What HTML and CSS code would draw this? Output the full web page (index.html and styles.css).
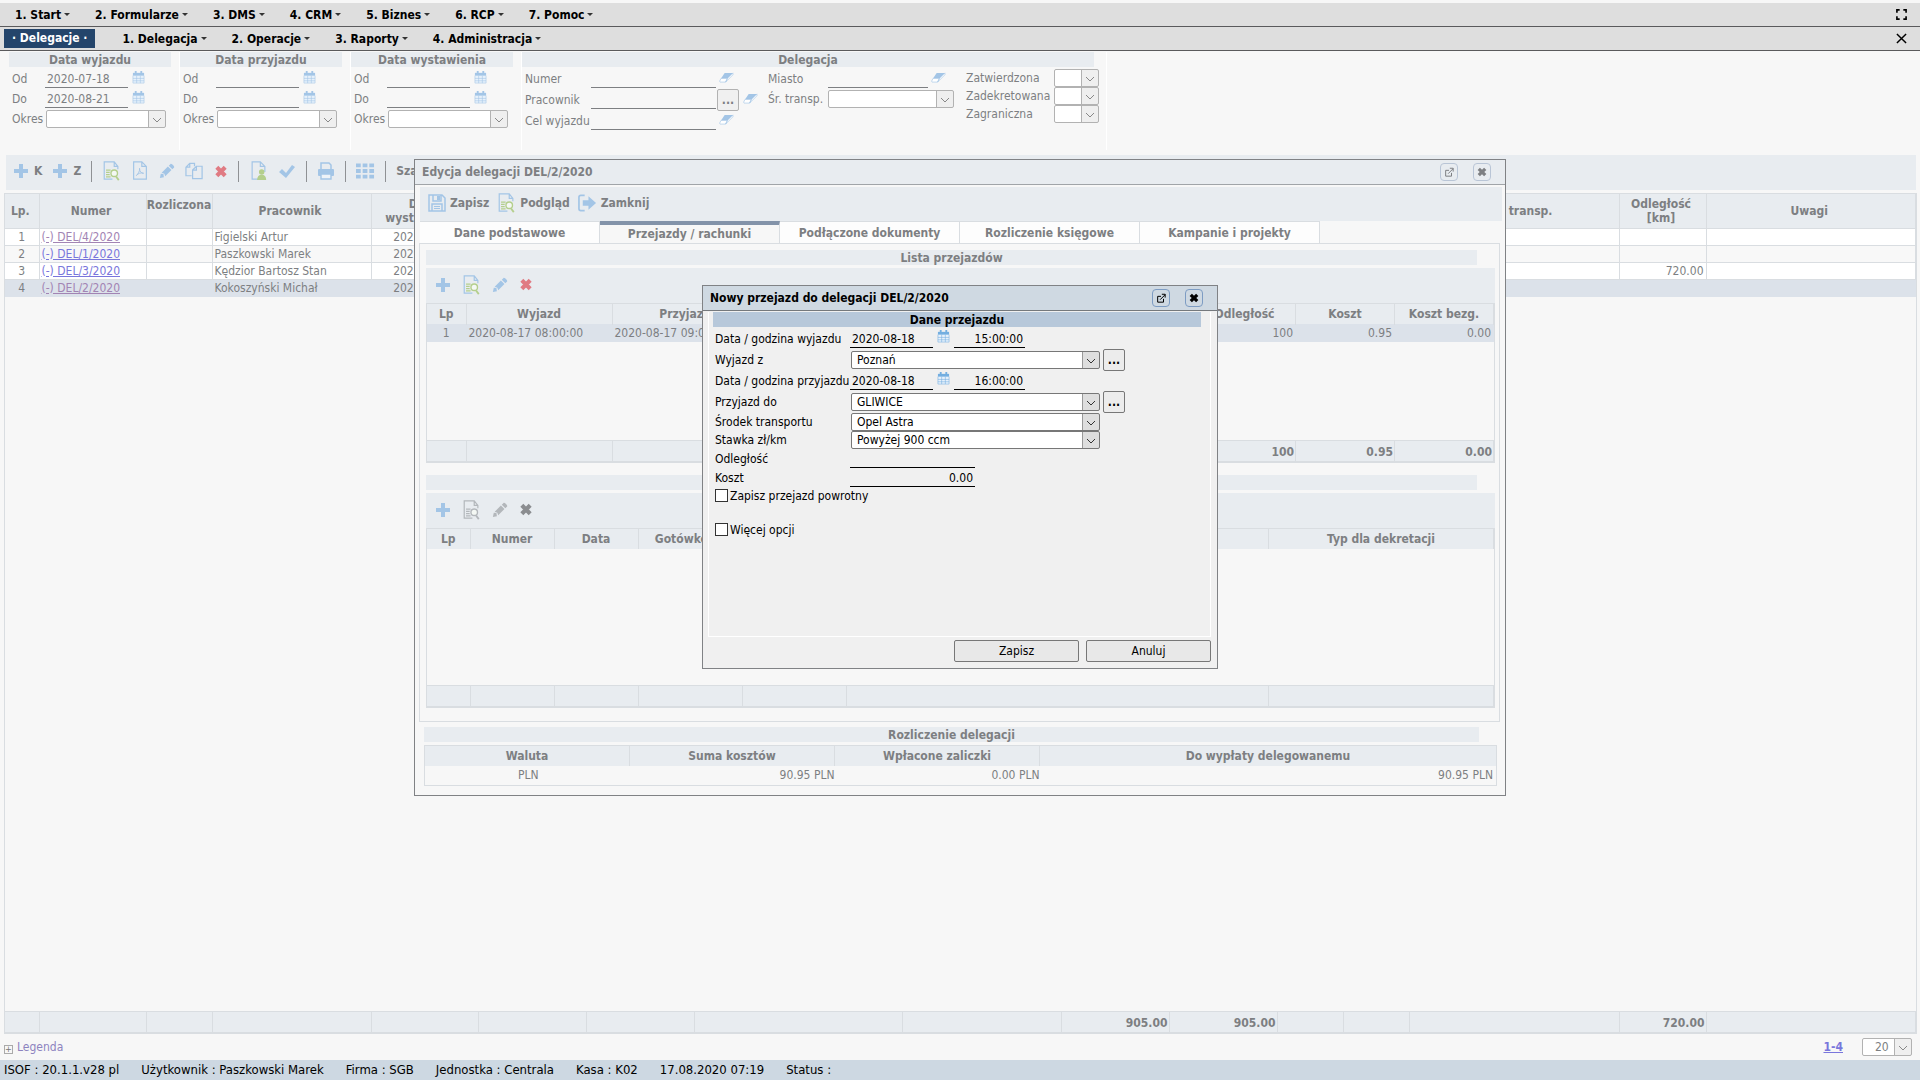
FILE: index.html
```html
<!DOCTYPE html>
<html lang="pl">
<head>
<meta charset="utf-8">
<title>Delegacje</title>
<link rel="stylesheet" href="styles.css">
</head>
<body>
<svg class="sprite" aria-hidden="true">
  <symbol id="plus" viewBox="0 0 16 16"><path d="M6 1h4v5h5v4h-5v5H6v-5H1V6h5z" fill="currentColor"/></symbol>
  <symbol id="cal" viewBox="0 0 14 14"><path d="M1 2h12v11H1z" fill="#e6f1fb"/><path d="M1 2h12v3H1z" fill="currentColor"/><path d="M3 0h2v3H3zM9 0h2v3H9z" fill="currentColor"/><path d="M1 5v8h12V5M1 8h12M1 10.500h12M5 5v8M9 5v8" fill="none" stroke="currentColor" stroke-width=".6"/></symbol>
  <symbol id="eraser" viewBox="0 0 16 12"><path d="M6 1h9l-6 6H2z" fill="currentColor"/><path d="M2 7h7l-2 4H1l-.5-1zM9 7l6-6v2l-8 8z" fill="#fff" stroke="currentColor" stroke-width=".7"/></symbol>
  <symbol id="docfind" viewBox="0 0 20 22"><path d="M17 9V6l-4-5H2v19h9M13 1v5h4" fill="none" stroke="currentColor" stroke-width="1.300"/><path d="M4 10h5M4 12.500h4M4 15h4M4 17.500h5" stroke="var(--alt)" stroke-width="1.200"/><circle cx="13" cy="13.500" r="3.600" fill="#f4f8f4" stroke="var(--alt)" stroke-width="1.500"/><path d="M15 17l3 4" stroke="var(--alt)" stroke-width="2"/></symbol>
  <symbol id="pdf" viewBox="0 0 18 22"><path d="M11 1H2v19h14V6zM11 1v5h5" fill="none" stroke="currentColor" stroke-width="1.300"/><path d="M5 16c2-2 4-5 3.500-8 0 4 2 5.500 4.500 5.500-3-1-6 0-8 2.500z" fill="none" stroke="currentColor" stroke-width="1"/></symbol>
  <symbol id="pencil" viewBox="0 0 18 18"><path d="M1 17l1-5 3 .5L5.500 16zM3 11l7-7 4 4-7 7-1-3zM11 3l2-2c1-1 5 3 4 4l-2 2z" fill="currentColor"/></symbol>
  <symbol id="copy" viewBox="0 0 20 20"><path d="M7 15H1V6l4-4h5v3M5 2v4H1M8 9l4-4h6v13H8zM12 5v4H8" fill="none" stroke="currentColor" stroke-width="1.300"/></symbol>
  <symbol id="cross" viewBox="0 0 14 14"><path d="M2.500 2.500l9 9M11.500 2.500l-9 9" fill="none" stroke="currentColor" stroke-width="4.500"/></symbol>
  <symbol id="docuser" viewBox="0 0 18 22"><path d="M9 20H2V1h9l5 5v6M11 1v5h5" fill="none" stroke="currentColor" stroke-width="1.300"/><circle cx="12.500" cy="12" r="3" fill="var(--alt)"/><path d="M7.500 21c0-4 2-6 5-6s5 2 5 6z" fill="var(--alt)"/></symbol>
  <symbol id="check" viewBox="0 0 18 16"><path d="M1 9l3-3 4 4 6-8 3 2-9 11z" fill="currentColor"/></symbol>
  <symbol id="print" viewBox="0 0 18 18"><path d="M4 7V1h8l2 2v4" fill="none" stroke="currentColor" stroke-width="1.500"/><rect x="1" y="7" width="16" height="7" rx="1" fill="currentColor"/><path d="M4 12h10v5H4z" fill="#eef3f8" stroke="currentColor" stroke-width="1.400"/></symbol>
  <symbol id="tiles" viewBox="0 0 20 16"><path d="M0 0h5v4H0zM7 0h5v4H7zM14 0h5v4h-5zM0 6h5v4H0zM7 6h5v4H7zM14 6h5v4h-5zM0 12h5v4H0zM7 12h5v4H7zM14 12h5v4h-5z" fill="currentColor"/></symbol>
  <symbol id="save" viewBox="0 0 18 18"><path d="M1 1h13l3 3v13H1zM5 1v6h8V1M4 17v-7h10v7" fill="none" stroke="currentColor" stroke-width="1.500"/><path d="M9 2h3v4H9zM6 12h6v1H6zM6 14h6v1H6z" fill="currentColor"/></symbol>
  <symbol id="exit" viewBox="0 0 20 18"><path d="M7 1H3Q1 1 1 3v12q0 2 2 2h4" fill="none" stroke="currentColor" stroke-width="1.800"/><path d="M5 6h6V2l8 7-8 7v-4H5z" fill="currentColor"/></symbol>
  <symbol id="popout" viewBox="0 0 12 12"><path d="M6 4H2v7h7V7M5 8l6-6M7 1.500h4v4" fill="none" stroke="currentColor" stroke-width="1.200"/></symbol>
  <symbol id="full" viewBox="0 0 12 12"><path d="M1 4V1h3M8 1h3v3M11 8v3H8M4 11H1V8" fill="none" stroke="currentColor" stroke-width="1.800"/></symbol>
  <symbol id="thin" viewBox="0 0 12 12"><path d="M1 1l10 10M11 1L1 11" fill="none" stroke="currentColor" stroke-width="1.600"/></symbol>
</svg>

<header>
  <nav class="menubar">
    <button>1. Start</button><button>2. Formularze</button><button>3. DMS</button><button>4. CRM</button><button>5. Biznes</button><button>6. RCP</button><button>7. Pomoc</button>
    <button class="tool" aria-label="Pełny ekran"><svg><use href="#full"/></svg></button>
  </nav>
  <nav class="menubar">
    <a class="current" href="#">· Delegacje ·</a>
    <button>1. Delegacja</button><button>2. Operacje</button><button>3. Raporty</button><button>4. Administracja</button>
    <button class="tool" aria-label="Zamknij kartę"><svg><use href="#thin"/></svg></button>
  </nav>
</header>

<main class="list">
  <form class="filters">
    <section class="group">
      <h2 class="strip">Data wyjazdu</h2>
      <div class="dates">
        <label for="w1">Od</label><input id="w1" value="2020-07-18"><svg class="cal"><use href="#cal"/></svg>
        <label for="w2">Do</label><input id="w2" value="2020-08-21"><svg class="cal"><use href="#cal"/></svg>
        <label for="w3">Okres</label><select id="w3"><option></option></select>
      </div>
    </section>
    <section class="group">
      <h2 class="strip">Data przyjazdu</h2>
      <div class="dates">
        <label for="p1">Od</label><input id="p1"><svg class="cal"><use href="#cal"/></svg>
        <label for="p2">Do</label><input id="p2"><svg class="cal"><use href="#cal"/></svg>
        <label for="p3">Okres</label><select id="p3"><option></option></select>
      </div>
    </section>
    <section class="group">
      <h2 class="strip">Data wystawienia</h2>
      <div class="dates">
        <label for="s1">Od</label><input id="s1"><svg class="cal"><use href="#cal"/></svg>
        <label for="s2">Do</label><input id="s2"><svg class="cal"><use href="#cal"/></svg>
        <label for="s3">Okres</label><select id="s3"><option></option></select>
      </div>
    </section>
    <section class="group wide">
      <h2 class="strip">Delegacja</h2>
      <div class="cols">
        <div class="col-a">
          <label for="d1">Numer</label><input id="d1"><span class="acts"><svg class="era"><use href="#eraser"/></svg></span>
          <label for="d2">Pracownik</label><input id="d2"><span class="acts"><button type="button" class="dots">...</button><svg class="era"><use href="#eraser"/></svg></span>
          <label for="d3">Cel wyjazdu</label><input id="d3"><span class="acts"><svg class="era"><use href="#eraser"/></svg></span>
        </div>
        <div class="col-b">
          <label for="d4">Miasto</label><input id="d4"><svg class="era"><use href="#eraser"/></svg>
          <label for="d5">Śr. transp.</label><select id="d5"><option></option></select>
        </div>
        <div class="col-c">
          <label for="d6">Zatwierdzona</label><select id="d6"><option></option></select>
          <label for="d7">Zadekretowana</label><select id="d7"><option></option></select>
          <label for="d8">Zagraniczna</label><select id="d8"><option></option></select>
        </div>
      </div>
    </section>
  </form>

  <div class="toolbar main-tools">
    <button class="add"><svg class="i16"><use href="#plus"/></svg>K</button>
    <button class="add"><svg class="i16"><use href="#plus"/></svg>Z</button>
    <i class="sep"></i>
    <button aria-label="Podgląd"><svg class="i20"><use href="#docfind"/></svg></button>
    <button aria-label="PDF"><svg class="i18 high"><use href="#pdf"/></svg></button>
    <button aria-label="Edytuj"><svg class="i16"><use href="#pencil"/></svg></button>
    <button aria-label="Kopiuj"><svg class="i20"><use href="#copy"/></svg></button>
    <button aria-label="Usuń" class="red"><svg class="i14"><use href="#cross"/></svg></button>
    <i class="sep"></i>
    <button aria-label="Pracownik"><svg class="i20"><use href="#docuser"/></svg></button>
    <button aria-label="Zatwierdź"><svg class="i18"><use href="#check"/></svg></button>
    <i class="sep"></i>
    <button aria-label="Drukuj"><svg class="i18"><use href="#print"/></svg></button>
    <i class="sep"></i>
    <button aria-label="Kolumny"><svg class="i20"><use href="#tiles"/></svg></button>
    <i class="sep"></i>
    <button>Szablony</button>
  </div>

  <div class="grid">
    <table class="data">
      <colgroup><col class="c34"><col class="c107"><col class="c66"><col class="c159"><col class="c107"><col class="c108"><col class="c108"><col class="c208"><col class="c159"><col class="c108"><col class="c108"><col class="c66"><col class="c66"><col class="c210"><col class="c87"><col></colgroup>
      <thead><tr><th>Lp.</th><th>Numer</th><th class="top">Rozliczona</th><th>Pracownik</th><th>Data wystawienia</th><th></th><th></th><th></th><th></th><th></th><th></th><th></th><th></th><th>Środ. transp.</th><th>Odległość [km]</th><th>Uwagi</th></tr></thead>
      <tbody>
        <tr><td class="c">1</td><td><a class="seen" href="#">(-) DEL/4/2020</a></td><td></td><td>Figielski Artur</td><td class="c">2020-08-21</td><td></td><td></td><td></td><td></td><td></td><td></td><td></td><td></td><td></td><td></td><td></td></tr>
        <tr><td class="c">2</td><td><a href="#">(-) DEL/1/2020</a></td><td></td><td>Paszkowski Marek</td><td class="c">2020-08-17</td><td></td><td></td><td></td><td></td><td></td><td></td><td></td><td></td><td></td><td></td><td></td></tr>
        <tr><td class="c">3</td><td><a href="#">(-) DEL/3/2020</a></td><td></td><td>Kędzior Bartosz Stan</td><td class="c">2020-08-17</td><td></td><td></td><td></td><td></td><td></td><td></td><td></td><td></td><td></td><td class="r">720.00</td><td></td></tr>
        <tr class="sel"><td class="c">4</td><td><a class="seen" href="#">(-) DEL/2/2020</a></td><td></td><td>Kokoszyński Michał</td><td class="c">2020-08-17</td><td></td><td></td><td></td><td></td><td></td><td></td><td></td><td></td><td></td><td></td><td></td></tr>
      </tbody>
    </table>
    <table class="data sums">
      <colgroup><col class="c34"><col class="c107"><col class="c66"><col class="c159"><col class="c107"><col class="c108"><col class="c108"><col class="c208"><col class="c159"><col class="c108"><col class="c108"><col class="c66"><col class="c66"><col class="c210"><col class="c87"><col></colgroup>
      <tbody><tr><td></td><td></td><td></td><td></td><td></td><td></td><td></td><td></td><td></td><td>905.00</td><td>905.00</td><td></td><td></td><td></td><td>720.00</td><td></td></tr></tbody>
    </table>
  </div>

  <div class="pager">
    <button class="legend"><span class="box">+</span>Legenda</button>
    <a href="#">1-4</a>
    <select aria-label="Liczba wierszy"><option>20</option></select>
  </div>
</main>

<footer class="status"><span>ISOF : 20.1.1.v28 pl</span><span>Użytkownik : Paszkowski Marek</span><span>Firma : SGB</span><span>Jednostka : Centrala</span><span>Kasa : K02</span><span>17.08.2020 07:19</span><span>Status :</span></footer>

<section class="window edit" role="dialog" aria-label="Edycja delegacji DEL/2/2020">
  <header class="title"><h1>Edycja delegacji DEL/2/2020</h1><button aria-label="Otwórz w oknie"><svg><use href="#popout"/></svg></button><button aria-label="Zamknij"><svg><use href="#cross"/></svg></button></header>
  <div class="toolbar">
    <button><svg class="i18"><use href="#save"/></svg>Zapisz</button>
    <button><svg class="i20"><use href="#docfind"/></svg>Podgląd</button>
    <button><svg class="i20"><use href="#exit"/></svg>Zamknij</button>
  </div>
  <nav class="tabs"><button>Dane podstawowe</button><button class="on">Przejazdy / rachunki</button><button>Podłączone dokumenty</button><button>Rozliczenie księgowe</button><button>Kampanie i projekty</button></nav>
  <div class="panel">
    <h2 class="strip">Lista przejazdów</h2>
    <div class="toolbar small">
      <button aria-label="Dodaj"><svg class="i16"><use href="#plus"/></svg></button>
      <button aria-label="Podgląd"><svg class="i20"><use href="#docfind"/></svg></button>
      <button aria-label="Edytuj"><svg class="i16"><use href="#pencil"/></svg></button>
      <button aria-label="Usuń" class="red"><svg class="i14"><use href="#cross"/></svg></button>
    </div>
    <div class="sub trips">
      <table class="data">
        <colgroup><col class="c39"><col class="c146"><col class="c146"><col><col class="c102"><col class="c99"><col class="c99"></colgroup>
        <thead><tr><th>Lp</th><th>Wyjazd</th><th>Przyjazd</th><th></th><th>Odległość</th><th>Koszt</th><th>Koszt bezg.</th></tr></thead>
        <tbody><tr class="sel"><td class="c">1</td><td>2020-08-17 08:00:00</td><td>2020-08-17 09:00:00</td><td></td><td class="r">100</td><td class="r">0.95</td><td class="r">0.00</td></tr></tbody>
      </table>
      <table class="data sums">
        <colgroup><col class="c39"><col class="c146"><col class="c146"><col><col class="c102"><col class="c99"><col class="c99"></colgroup>
        <tbody><tr><td></td><td></td><td></td><td></td><td>100</td><td>0.95</td><td>0.00</td></tr></tbody>
      </table>
    </div>
    <div class="strip second"></div>
    <div class="toolbar small">
      <button aria-label="Dodaj"><svg class="i16"><use href="#plus"/></svg></button>
      <button aria-label="Podgląd" class="off"><svg class="i20"><use href="#docfind"/></svg></button>
      <button aria-label="Edytuj" class="off"><svg class="i16"><use href="#pencil"/></svg></button>
      <button aria-label="Usuń" class="off dark"><svg class="i14"><use href="#cross"/></svg></button>
    </div>
    <div class="sub bills">
      <table class="data">
        <colgroup><col class="c43"><col class="c84"><col class="c84"><col class="c104"><col class="c104"><col><col class="c225"></colgroup>
        <thead><tr><th>Lp</th><th>Numer</th><th>Data</th><th>Gotówkowe</th><th></th><th></th><th>Typ dla dekretacji</th></tr></thead>
      </table>
      <table class="data sums">
        <colgroup><col class="c43"><col class="c84"><col class="c84"><col class="c104"><col class="c104"><col><col class="c225"></colgroup>
        <tbody><tr><td></td><td></td><td></td><td></td><td></td><td></td><td></td></tr></tbody>
      </table>
    </div>
  </div>
  <div class="settle">
    <h2 class="strip">Rozliczenie delegacji</h2>
    <table class="data">
      <colgroup><col class="c205"><col class="c205"><col class="c205"><col></colgroup>
      <thead><tr><th>Waluta</th><th>Suma kosztów</th><th>Wpłacone zaliczki</th><th>Do wypłaty delegowanemu</th></tr></thead>
      <tbody><tr><td class="c">PLN</td><td class="r">90.95 PLN</td><td class="r">0.00 PLN</td><td class="r last">90.95 PLN</td></tr></tbody>
    </table>
  </div>
</section>

<section class="window trip" role="dialog" aria-label="Nowy przejazd do delegacji DEL/2/2020">
  <header class="title"><h1>Nowy przejazd do delegacji DEL/2/2020</h1><button aria-label="Otwórz w oknie"><svg><use href="#popout"/></svg></button><button aria-label="Zamknij"><svg><use href="#cross"/></svg></button></header>
  <form>
    <div class="box-in">
      <h2 class="strip">Dane przejazdu</h2>
      <div class="row"><label for="f1">Data / godzina wyjazdu</label><input id="f1" class="date" value="2020-08-18"><svg class="cal"><use href="#cal"/></svg><input class="time" aria-label="Godzina wyjazdu" value="15:00:00"></div>
      <div class="row tall"><label for="f2">Wyjazd z</label><select id="f2"><option>Poznań</option></select><button type="button" class="dots">...</button></div>
      <div class="row"><label for="f3">Data / godzina przyjazdu</label><input id="f3" class="date" value="2020-08-18"><svg class="cal"><use href="#cal"/></svg><input class="time" aria-label="Godzina przyjazdu" value="16:00:00"></div>
      <div class="row tall"><label for="f4">Przyjazd do</label><select id="f4"><option>GLIWICE</option></select><button type="button" class="dots">...</button></div>
      <div class="row tight"><label for="f5">Środek transportu</label><select id="f5"><option>Opel Astra</option></select></div>
      <div class="row tight"><label for="f6">Stawka zł/km</label><select id="f6"><option>Powyżej 900 ccm</option></select></div>
      <div class="row"><label for="f7">Odległość</label><input id="f7" class="num"></div>
      <div class="row tight"><label for="f8">Koszt</label><input id="f8" class="num" value="0.00"></div>
      <div class="check"><input type="checkbox" id="k1"><label for="k1">Zapisz przejazd powrotny</label></div>
      <div class="check"><input type="checkbox" id="k2"><label for="k2">Więcej opcji</label></div>
    </div>
    <div class="buttons"><button type="button">Zapisz</button><button type="button">Anuluj</button></div>
  </form>
</section>
</body>
</html>
```
FILE: styles.css
```css
:root {
  --blue: #a3c5e6;
  --alt: #b4cf8c;
  --bar: #e8ecf0;
  --line: #d9dde1;
  --text: #7d7f82;
}
* { box-sizing: border-box; }
body {
  margin: 0;
  min-height: 100vh;
  display: flex;
  flex-direction: column;
  position: relative;
  background: #f7f7f7;
  color: var(--text);
  font: 12px/14px "DejaVu Sans Condensed", "Noto Sans", sans-serif;
}
.sprite { display: none; }
svg { display: block; flex: none; color: var(--blue); overflow: visible; }
h1, h2 { margin: 0; font-size: 12px; line-height: 14px; }
button, input, select { font: inherit; color: inherit; margin: 0; padding: 0; border: 0; background: none; border-radius: 0; }
button { white-space: nowrap; }
a { color: #7976dc; }
a.seen { color: #a284b4; }

/* menu bars */
body > header { padding-top: 3px; }
.menubar {
  display: flex;
  align-items: center;
  gap: 25px;
  height: 24px;
  padding: 0 13px 0 15px;
  background: #dedede;
  border-bottom: 1px solid #5a5a5c;
  color: #000;
  font-weight: bold;
}
.menubar button { display: flex; align-items: center; gap: 3px; }
.menubar button:not(.tool)::after { content: ""; border: 3px solid transparent; border-top-color: #333; border-bottom: 0; }
.menubar .tool { margin-left: auto; }
.menubar .tool svg { width: 11px; height: 11px; color: #000; }
.menubar .current {
  margin: 0 2px 0 -11px;
  padding: 0 8px;
  line-height: 19px;
  background: #24456b;
  color: #fff;
  text-decoration: none;
}

/* filters */
.list { flex: 1; display: flex; flex-direction: column; padding: 0 3px 0 4px; }
.filters { display: flex; height: 104px; padding: 1px 0 5px 5px; }
.strip { height: 15px; background: var(--bar); text-align: center; font-weight: bold; padding-top: 1px; }
.group { width: 171px; padding-right: 5px; margin-right: 0; border-right: 1px solid #fff; }
.group .strip { margin-right: 3px; }
.group.wide { width: 585px; padding-right: 9px; }
input { height: 18px; border-bottom: 1px solid currentColor; padding: 0 2px; min-width: 0; }
select {
  appearance: none;
  height: 18px;
  padding: 0 20px 0 5px;
  border: 1px solid #b2b2b2;
  border-radius: 2px;
  background: #fff url("data:image/svg+xml,%3Csvg xmlns='http://www.w3.org/2000/svg' width='17' height='16'%3E%3Cpath d='M0 0h17v16H0z' fill='%23efefef'/%3E%3Cpath d='M.5 0v16' stroke='%23b2b2b2'/%3E%3Cpath d='M5 7l4 4 4-4' fill='none' stroke='%23888'/%3E%3C/svg%3E") right center no-repeat;
}
.cal { width: 13px; height: 13px; }
.era { width: 15px; height: 11px; }
.dots { width: 22px; height: 22px; border: 1px solid #b2b2b2; border-radius: 2px; background: #f0f0f0; font-weight: bold; }
.dates { display: grid; grid-template: 20px 20px 20px / 33px 83px 1fr; align-items: center; padding: 2px 8px 0 3px; }
.dates .cal { margin: -4px 0 0 4px; }
.dates select { grid-column: 2 / 4; margin-left: 1px; }
.cols { display: flex; padding-top: 2px; }
.cols > div { flex: none; }
.col-a { display: grid; grid-template: 20px 22px 20px / 66px 125px 52px; align-items: center; padding-left: 3px; }
.acts { display: flex; align-items: center; gap: 4px; padding-left: 3px; }
.acts .dots { margin-left: -2px; }
.cols .era { margin-top: -4px; }
.col-b { display: grid; grid-template: 20px 20px / 60px 100px 26px; align-items: center; width: 198px; }
.col-b .era { margin-left: 3px; }
.col-b select { grid-column: 2 / 4; }
.col-c { display: grid; grid-template: 18px 18px 18px / 88px 45px; align-items: center; }

/* toolbars */
.toolbar { display: flex; align-items: center; gap: 11px; height: 35px; background: var(--bar); font-weight: bold; }
.toolbar button { display: flex; align-items: center; gap: 5px; }
.i14 { width: 14px; height: 13px; }
.i16 { width: 16px; height: 16px; }
.i18 { width: 18px; height: 18px; }
.i18.high { height: 20px; }
.i20 { width: 19px; height: 20px; }
.red svg { color: #e07b83; }
.off { --alt: #b3b7bb; }
.off svg { color: #b3b7bb; }
.dark svg { color: #8b8d90; }
.sep { width: 1px; height: 21px; background: #8f9194; }
.main-tools { margin: 0 1px 3px 2px; padding: 0 0 3px 7px; gap: 10px; }

/* tables */
.grid { flex: 1; display: flex; flex-direction: column; justify-content: space-between; border: 1px solid var(--line); }
.data { width: 100%; table-layout: fixed; border-collapse: collapse; }
.data th { height: 34px; padding: 0 7px 0 4px; background: var(--bar); border-right: 1px solid var(--line); overflow: hidden; line-height: 14px; }
.data th.top { vertical-align: top; padding: 4px 0; }
.data td { height: 17px; padding: 0 2px; background: #fff; border: 1px solid var(--line); border-left: 0; line-height: 14px; white-space: nowrap; overflow: hidden; }
.data tbody tr:nth-child(2) td { background: #f8f8f8; }
.data .sel td { background: #dce2ea; border-color: #dce2ea; }
.c { text-align: center; }
.r { text-align: right; }
.data.sums td { height: 21px; padding: 2px 1px 0; background: var(--bar); text-align: right; font-weight: bold; }
.c34 { width: 34px; } .c39 { width: 39px; } .c43 { width: 43px; } .c66 { width: 66px; }
.c84 { width: 84px; } .c87 { width: 87px; } .c99 { width: 99px; } .c102 { width: 102px; }
.c104 { width: 104px; } .c107 { width: 107px; } .c108 { width: 108px; } .c146 { width: 146px; }
.c159 { width: 159px; } .c205 { width: 205px; } .c208 { width: 208px; }
.c210 { width: 210px; } .c225 { width: 225px; }

.pager { display: flex; align-items: center; gap: 19px; height: 26px; padding-right: 5px; }
.pager a { margin-left: auto; font-weight: bold; }
.pager select { width: 50px; padding-left: 12px; }
.legend { display: flex; align-items: center; gap: 4px; color: #8d83bf; }
.legend .box { width: 9px; height: 9px; border: 1px solid #aaa; line-height: 7px; font-size: 9px; color: #777; margin-top: 4px; }
.status { display: flex; gap: 22px; height: 20px; padding-left: 4px; align-items: center; background: #cdd8e2; color: #000; font-size: 13px; }

/* windows */
.window { position: absolute; left: 0; right: 0; margin: 0 auto; border: 1px solid #808285; background: #f7f7f7; }
.title { display: flex; align-items: center; gap: 15px; height: 25px; padding: 0 14px 0 7px; background: var(--bar); border-bottom: 1px solid #a0a4a8; }
.title h1 { flex: 1; }
.title button { display: grid; place-items: center; width: 18px; height: 18px; border: 1px solid #b9c5d6; border-radius: 4px; }
.title svg { width: 10px; height: 10px; color: inherit; }
.edit { top: 159px; width: 1092px; padding-bottom: 9px; }
.edit > .toolbar { margin: 2px 3px 0 5px; height: 34px; padding: 0 0 3px 8px; gap: 8px; }
.edit > .toolbar button { gap: 4px; }
.tabs { display: flex; padding-left: 5px; }
.tabs button { width: 180px; height: 22px; font-weight: bold; background: #fdfdfd; border: 1px solid var(--line); border-width: 1px 1px 0 0; }
.tabs button.on { background: #f7f7f7; border-top: 4px solid #8393a9; line-height: 14px; }
.panel { margin: 0 5px 0 4px; padding: 6px 4px 13px 6px; border: 1px solid var(--line); }
.panel .strip { margin-right: 18px; }
.panel .strip.second { margin-top: 12px; }
.small { margin-top: 3px; padding: 0 0 2px 9px; }
.sub { display: flex; flex-direction: column; justify-content: space-between; border: 1px solid var(--line); }
.sub .data th, .settle .data th { height: 20px; padding: 0 4px; }
.trips { height: 160px; }
.bills { height: 180px; }
.settle { padding: 5px 8px 0 9px; }
.settle .strip { margin: 0 18px 3px 0; }
.settle .data { border: 1px solid var(--line); }
.settle .data td { height: 20px; padding-right: 0; background: none; border-width: 0; }
.settle .data .last { padding-right: 3px; }

.trip { top: 285px; width: 516px; height: 384px; background: #f0f0f0; color: #000; --blue: #73aee0; --bar: #cfd9e2; }
.trip .title { border-color: #75797d; padding-right: 14px; }
.trip .title button { border-color: #7d9cc3; }
.trip form { padding: 1px 6px 0 5px; }
.box-in { height: 325px; padding: 0 9px 0 4px; border: 1px solid #fff; border-top: 0; }
.trip .strip { background: #b7c8da; margin-bottom: 2px; }
.row { display: flex; align-items: center; height: 20px; padding-left: 2px; }
.row.tall { height: 22px; }
.row.tight { height: 18px; }
.row > label { width: 135px; white-space: nowrap; }
.date { width: 83px; }
.row .cal { margin: -5px 4px 0; }
.time { width: 71px; text-align: right; }
.num { width: 125px; text-align: right; }
.row select {
  width: 249px;
  margin: 0 3px 0 1px;
  border-color: #777;
  background-image: url("data:image/svg+xml,%3Csvg xmlns='http://www.w3.org/2000/svg' width='17' height='16'%3E%3Cpath d='M0 0h17v16H0z' fill='%23dedede'/%3E%3Cpath d='M.5 0v16' stroke='%23999'/%3E%3Cpath d='M5 7l4 4 4-4' fill='none' stroke='%23333'/%3E%3C/svg%3E");
}
.row .dots { border-color: #777; background: #ececec; }
.check { display: flex; align-items: center; gap: 2px; height: 17px; margin: 0 0 17px 2px; }
.check input { appearance: none; width: 13px; height: 13px; border: 1px solid #333; background: #fff; }
.buttons { display: flex; justify-content: flex-end; gap: 7px; padding-top: 3px; }
.buttons button { width: 125px; height: 22px; border: 1px solid #777; border-radius: 2px; background: #e8e8e8; }
```
